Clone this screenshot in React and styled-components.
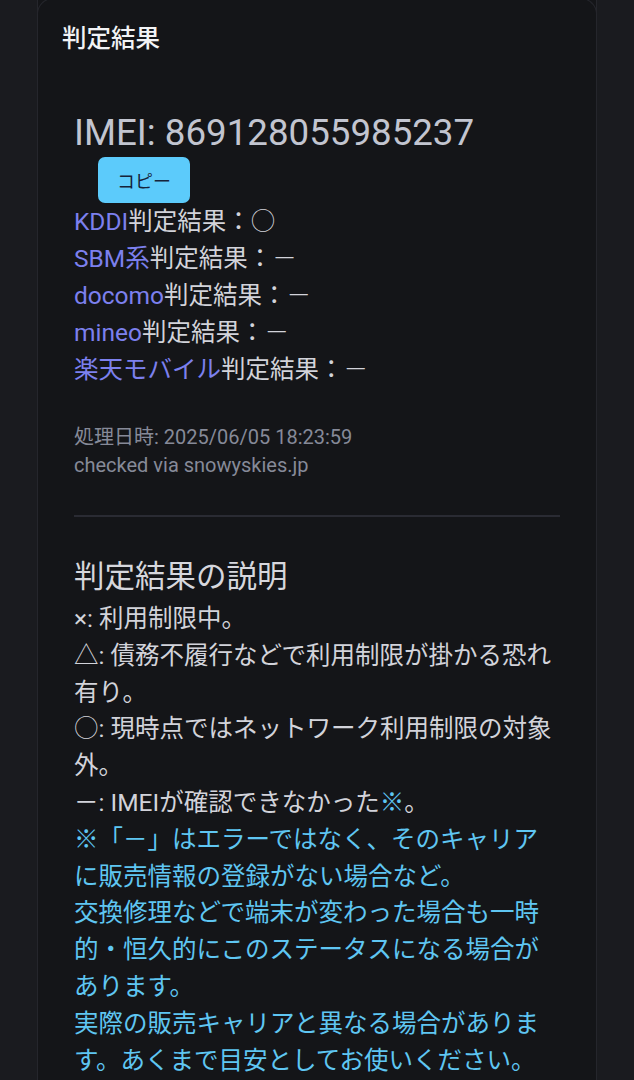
import React from "react";
import styled, { createGlobalStyle } from "styled-components";

const Global = createGlobalStyle`
  html, body {
    margin: 0;
    padding: 0;
    background: #1a1b1f;
  }
  body {
    font-family: "Roboto", "Noto Sans CJK JP", sans-serif;
    color: #d2d3da;
  }
`;

const Page = styled.div`
  padding: 0 37px;
  min-height: 1080px;
  box-sizing: border-box;
`;

const Card = styled.section`
  background: #141518;
  border: 1px solid #25262c;
  border-top: none;
  border-radius: 0 0 16px 16px;
  position: relative;
  &::before {
    content: "";
    position: absolute;
    left: -1px;
    right: -1px;
    top: -2px;
    height: 24px;
    border: 1px solid #25262c;
    border-bottom: none;
    border-radius: 16px 16px 0 0;
    pointer-events: none;
  }
`;

const CardTitle = styled.h2`
  margin: 0;
  padding: 20px 24px 0;
  font-size: 24.5px;
  line-height: 37px;
  font-weight: 500;
  color: #f2f3f5;
`;

const Body = styled.div`
  padding: 54px 36px 40px;
`;

const Imei = styled.div`
  font-size: 36.7px;
  line-height: 44px;
  color: #c2c5d0;
  font-weight: 400;
`;

const CopyButton = styled.button`
  display: block;
  margin: 2px 0 0 24px;
  width: 92px;
  height: 46px;
  border: none;
  border-radius: 7px;
  background: #5ccbfb;
  color: #15233a;
  font-family: "Roboto", "Noto Sans CJK JP", sans-serif;
  font-size: 18px;
  padding: 0;
`;

const ResultList = styled.div`
  display: flex;
  flex-direction: column;
`;

const Row = styled.div`
  font-size: 24.5px;
  line-height: 37px;
  color: #d2d3da;
  white-space: nowrap;
`;

const Carrier = styled.span`
  color: #7c80ee;
`;

const Meta = styled.div`
  margin-top: 35px;
  font-size: 20px;
  line-height: 28px;
  color: #868a98;
`;

const Divider = styled.hr`
  margin: 36px 0 0;
  border: none;
  height: 2px;
  background: #2a2b33;
`;

const ExplainTitle = styled.h3`
  margin: 40px 0 0;
  font-size: 30.5px;
  line-height: 40px;
  font-weight: 400;
  color: #d6d7dd;
`;

const Explain = styled.div`
  margin-top: 4px;
  font-size: 24.5px;
  line-height: 36.8px;
  color: #d2d3da;
`;

const Line = styled.div`
  color: ${(p) => (p.$note ? "#5fc6f2" : "#d2d3da")};
`;

const Note = styled.span`
  color: #5fc6f2;
`;

const Mark = styled.span`
  font-family: "Noto Sans CJK JP", sans-serif;
  font-weight: 300;
  line-height: 1;
`;

const carriers = [
  ["KDDI", "○"],
  ["SBM系", "－"],
  ["docomo", "－"],
  ["mineo", "－"],
  ["楽天モバイル", "－"],
];

export default function App() {
  return (
    <>
      <Global />
      <Page>
        <Card>
          <CardTitle>判定結果</CardTitle>
          <Body>
            <Imei>IMEI: 869128055985237</Imei>
            <CopyButton>コピー</CopyButton>
            <ResultList>
              {carriers.map(([name, mark]) => (
                <Row key={name}>
                  <Carrier>{name}</Carrier>判定結果：<Mark>{mark}</Mark>
                </Row>
              ))}
            </ResultList>
            <Meta>
              <div>処理日時: 2025/06/05 18:23:59</div>
              <div>checked via snowyskies.jp</div>
            </Meta>
            <Divider />
            <ExplainTitle>判定結果の説明</ExplainTitle>
            <Explain>
              <Line>×: 利用制限中。</Line>
              <Line>△: 債務不履行などで利用制限が掛かる恐れ有り。</Line>
              <Line>
                <Mark>○</Mark>: 現時点ではネットワーク利用制限の対象外。
              </Line>
              <Line>
                －: IMEIが確認できなかった<Note>※</Note>。
              </Line>
              <Line $note>
                ※「－」はエラーではなく、そのキャリアに販売情報の登録がない場合など。
              </Line>
              <Line $note>
                交換修理などで端末が変わった場合も一時的・恒久的にこのステータスになる場合があります。
              </Line>
              <Line $note>
                実際の販売キャリアと異なる場合があります。あくまで目安としてお使いください。
              </Line>
            </Explain>
          </Body>
        </Card>
      </Page>
    </>
  );
}
